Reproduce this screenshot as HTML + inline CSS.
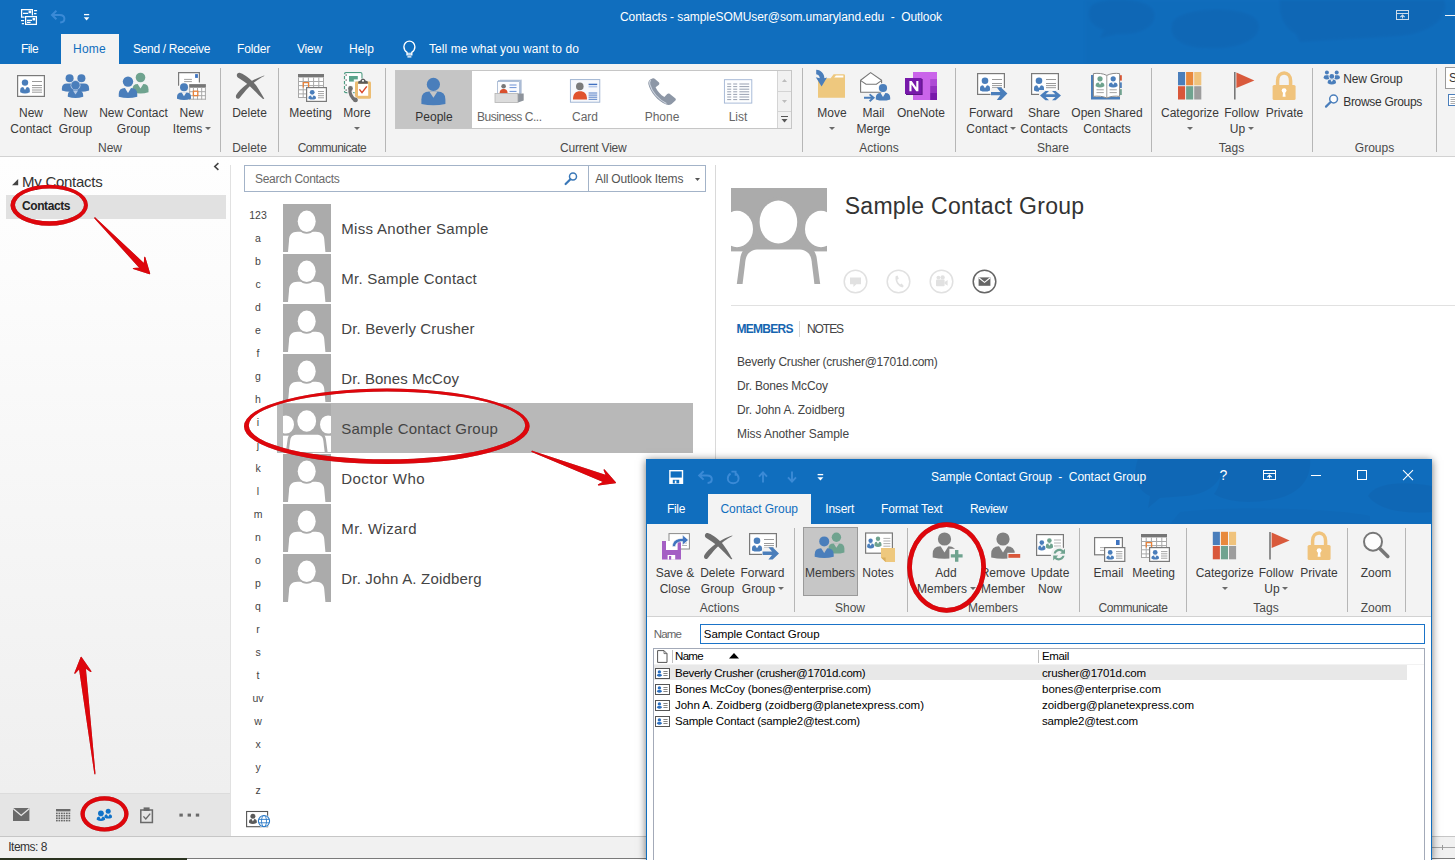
<!DOCTYPE html>
<html><head><meta charset="utf-8"><title>Contacts - Outlook</title>
<style>
html,body{margin:0;padding:0;}
body{width:1455px;height:860px;overflow:hidden;position:relative;background:#fff;font-family:"Liberation Sans",sans-serif;}
body div,body svg,.t{position:absolute;}
.t{white-space:nowrap;display:block;}
svg{overflow:visible;}
</style></head><body>
<div style="left:0px;top:0px;width:1455px;height:64px;background:#106ebe;"></div>
<div style="left:0px;top:64px;width:1455px;height:92px;background:#f3f3f3;"></div>
<div style="left:0px;top:156px;width:1455px;height:1px;background:#d2d2d2;"></div>
<div style="left:0px;top:157px;width:230px;height:636px;background:linear-gradient(#fefefe,#fcfcfc 18%,#efefef);"></div>
<div style="left:230px;top:165px;width:1px;height:671px;background:#e1e1e1;"></div>
<div style="left:0px;top:793px;width:230px;height:43px;background:#e5e5e5;"></div>
<div style="left:0px;top:793px;width:230px;height:1px;background:#dcdcdc;"></div>
<div style="left:715px;top:165px;width:1px;height:671px;background:#d9d9d9;"></div>
<div style="left:0px;top:836px;width:1455px;height:22px;background:#f1f1f1;"></div>
<div style="left:0px;top:836px;width:1455px;height:1px;background:#c6c6c6;"></div>
<div style="left:0px;top:858.4px;width:1455px;height:2px;background:#fff;"></div>
<div style="left:0px;top:858.4px;width:187px;height:2px;background:#2b3320;"></div>
<div style="left:187px;top:858.4px;width:1268px;height:0.8px;background:#7a7a7a;"></div>
<span class="t" style="left:620.00px;top:8.00px;font-size:12px;line-height:18px;color:#fff;letter-spacing:-0.067px;white-space:pre;">Contacts - sampleSOMUser@som.umaryland.edu  -  Outlook</span>
<div style="left:61px;top:34px;width:58px;height:30px;background:#f3f3f3;"></div>
<span class="t" style="left:21.00px;top:39.50px;font-size:12px;line-height:18px;color:#fff;letter-spacing:-0.584px;">File</span>
<span class="t" style="left:73.00px;top:39.50px;font-size:12px;line-height:18px;color:#106ebe;letter-spacing:0.248px;">Home</span>
<span class="t" style="left:133.00px;top:39.50px;font-size:12px;line-height:18px;color:#fff;letter-spacing:-0.313px;">Send / Receive</span>
<span class="t" style="left:237.00px;top:39.50px;font-size:12px;line-height:18px;color:#fff;letter-spacing:-0.169px;">Folder</span>
<span class="t" style="left:297.00px;top:39.50px;font-size:12px;line-height:18px;color:#fff;letter-spacing:-0.198px;">View</span>
<span class="t" style="left:349.00px;top:39.50px;font-size:12px;line-height:18px;color:#fff;letter-spacing:0.080px;">Help</span>
<span class="t" style="left:429.00px;top:39.50px;font-size:12px;line-height:18px;color:#fff;letter-spacing:0.071px;">Tell me what you want to do</span>
<span class="t" style="left:19.00px;top:104.00px;font-size:12px;line-height:18px;color:#3a3a3a;">New</span>
<span class="t" style="left:10.32px;top:120.00px;font-size:12px;line-height:18px;color:#3a3a3a;">Contact</span>
<span class="t" style="left:63.50px;top:104.00px;font-size:12px;line-height:18px;color:#3a3a3a;">New</span>
<span class="t" style="left:58.82px;top:120.00px;font-size:12px;line-height:18px;color:#3a3a3a;">Group</span>
<span class="t" style="left:99.15px;top:104.00px;font-size:12px;line-height:18px;color:#3a3a3a;">New Contact</span>
<span class="t" style="left:116.82px;top:120.00px;font-size:12px;line-height:18px;color:#3a3a3a;">Group</span>
<span class="t" style="left:179.50px;top:104.00px;font-size:12px;line-height:18px;color:#3a3a3a;">New</span>
<span class="t" style="left:172.83px;top:120.00px;font-size:12px;line-height:18px;color:#3a3a3a;">Items</span>
<svg style="left:204.6690625px;top:127.1px;" width="6" height="3" viewBox="0 0 6 3"><path d="M0 0H6L3.0 3Z" fill="#6a6a6a"/></svg>
<span class="t" style="left:98.00px;top:139.00px;font-size:12px;line-height:18px;color:#4a4a4a;">New</span>
<div style="left:220px;top:68px;width:1px;height:84px;background:#b6b6b6;"></div>
<span class="t" style="left:232.16px;top:104.00px;font-size:12px;line-height:18px;color:#3a3a3a;">Delete</span>
<span class="t" style="left:232.16px;top:139.00px;font-size:12px;line-height:18px;color:#4a4a4a;">Delete</span>
<div style="left:278px;top:68px;width:1px;height:84px;background:#b6b6b6;"></div>
<span class="t" style="left:289.35px;top:104.00px;font-size:12px;line-height:18px;color:#3a3a3a;">Meeting</span>
<span class="t" style="left:343.33px;top:104.00px;font-size:12px;line-height:18px;color:#3a3a3a;">More</span>
<svg style="left:354.0px;top:126.9px;" width="6" height="3" viewBox="0 0 6 3"><path d="M0 0H6L3.0 3Z" fill="#6a6a6a"/></svg>
<span class="t" style="left:297.70px;top:139.00px;font-size:12px;line-height:18px;color:#4a4a4a;letter-spacing:-0.503px;">Communicate</span>
<div style="left:385px;top:68px;width:1px;height:84px;background:#b6b6b6;"></div>
<div style="left:395px;top:70px;width:397px;height:59px;background:#fff;border:1px solid #c6c6c6;box-sizing:border-box;"></div>
<div style="left:396px;top:71px;width:76px;height:57px;background:#c5c5c5;"></div>
<span class="t" style="left:415.32px;top:108.00px;font-size:12px;line-height:18px;color:#333;">People</span>
<span class="t" style="left:477.00px;top:108.00px;font-size:12px;line-height:18px;color:#666;letter-spacing:-0.476px;">Business C...</span>
<span class="t" style="left:572.00px;top:108.00px;font-size:12px;line-height:18px;color:#666;">Card</span>
<span class="t" style="left:644.65px;top:108.00px;font-size:12px;line-height:18px;color:#666;">Phone</span>
<span class="t" style="left:728.66px;top:108.00px;font-size:12px;line-height:18px;color:#666;">List</span>
<div style="left:777px;top:71px;width:1px;height:57px;background:#d4d4d4;"></div>
<div style="left:778px;top:71px;width:13px;height:57px;background:#f1f1f1;"></div>
<div style="left:778px;top:91px;width:13px;height:1px;background:#d4d4d4;"></div>
<div style="left:778px;top:111px;width:13px;height:1px;background:#d4d4d4;"></div>
<svg style="left:782px;top:79px;" width="5" height="3" viewBox="0 0 5 3"><path d="M0 3H5L2.5 0Z" fill="#bdbdbd"/></svg>
<svg style="left:782px;top:100px;" width="5" height="3" viewBox="0 0 5 3"><path d="M0 0H5L2.5 3Z" fill="#bdbdbd"/></svg>
<svg style="left:781px;top:116px;" width="7" height="8" viewBox="0 0 7 8"><path d="M0 0.5H7" stroke="#555" stroke-width="1"/><path d="M0.5 3H6.5L3.5 6.5Z" fill="#555"/></svg>
<span class="t" style="left:560.00px;top:139.00px;font-size:12px;line-height:18px;color:#4a4a4a;letter-spacing:-0.220px;">Current View</span>
<div style="left:802px;top:68px;width:1px;height:84px;background:#b6b6b6;"></div>
<span class="t" style="left:817.33px;top:104.00px;font-size:12px;line-height:18px;color:#3a3a3a;">Move</span>
<svg style="left:829.0px;top:126.9px;" width="6" height="3" viewBox="0 0 6 3"><path d="M0 0H6L3.0 3Z" fill="#6a6a6a"/></svg>
<span class="t" style="left:862.50px;top:104.00px;font-size:12px;line-height:18px;color:#3a3a3a;">Mail</span>
<span class="t" style="left:856.49px;top:120.00px;font-size:12px;line-height:18px;color:#3a3a3a;">Merge</span>
<span class="t" style="left:896.99px;top:104.00px;font-size:12px;line-height:18px;color:#3a3a3a;">OneNote</span>
<span class="t" style="left:859.32px;top:139.00px;font-size:12px;line-height:18px;color:#4a4a4a;">Actions</span>
<div style="left:955px;top:68px;width:1px;height:84px;background:#b6b6b6;"></div>
<span class="t" style="left:968.99px;top:104.00px;font-size:12px;line-height:18px;color:#3a3a3a;">Forward</span>
<span class="t" style="left:966.32px;top:120.00px;font-size:12px;line-height:18px;color:#3a3a3a;">Contact</span>
<svg style="left:1010.17796875px;top:127.1px;" width="6" height="3" viewBox="0 0 6 3"><path d="M0 0H6L3.0 3Z" fill="#6a6a6a"/></svg>
<span class="t" style="left:1027.99px;top:104.00px;font-size:12px;line-height:18px;color:#3a3a3a;">Share</span>
<span class="t" style="left:1020.32px;top:120.00px;font-size:12px;line-height:18px;color:#3a3a3a;">Contacts</span>
<span class="t" style="left:1071.31px;top:104.00px;font-size:12px;line-height:18px;color:#3a3a3a;">Open Shared</span>
<span class="t" style="left:1083.32px;top:120.00px;font-size:12px;line-height:18px;color:#3a3a3a;">Contacts</span>
<span class="t" style="left:1036.99px;top:139.00px;font-size:12px;line-height:18px;color:#4a4a4a;">Share</span>
<div style="left:1151px;top:68px;width:1px;height:84px;background:#b6b6b6;"></div>
<span class="t" style="left:1160.98px;top:104.00px;font-size:12px;line-height:18px;color:#3a3a3a;">Categorize</span>
<svg style="left:1187.0px;top:126.9px;" width="6" height="3" viewBox="0 0 6 3"><path d="M0 0H6L3.0 3Z" fill="#6a6a6a"/></svg>
<span class="t" style="left:1224.16px;top:104.00px;font-size:12px;line-height:18px;color:#3a3a3a;">Follow</span>
<span class="t" style="left:1229.83px;top:120.00px;font-size:12px;line-height:18px;color:#3a3a3a;">Up</span>
<svg style="left:1247.6699999999998px;top:127.1px;" width="6" height="3" viewBox="0 0 6 3"><path d="M0 0H6L3.0 3Z" fill="#6a6a6a"/></svg>
<span class="t" style="left:1265.83px;top:104.00px;font-size:12px;line-height:18px;color:#3a3a3a;">Private</span>
<span class="t" style="left:1218.83px;top:139.00px;font-size:12px;line-height:18px;color:#4a4a4a;">Tags</span>
<div style="left:1312px;top:68px;width:1px;height:84px;background:#b6b6b6;"></div>
<span class="t" style="left:1343.20px;top:69.70px;font-size:12px;line-height:18px;color:#333;letter-spacing:-0.144px;">New Group</span>
<span class="t" style="left:1343.20px;top:93.00px;font-size:12px;line-height:18px;color:#333;letter-spacing:-0.300px;">Browse Groups</span>
<span class="t" style="left:1354.82px;top:139.00px;font-size:12px;line-height:18px;color:#4a4a4a;">Groups</span>
<div style="left:1436px;top:68px;width:1px;height:84px;background:#b6b6b6;"></div>
<div style="left:1445px;top:67px;width:12px;height:22px;background:#fff;border:1px solid #9a9a9a;box-sizing:border-box;"></div>
<span class="t" style="left:1449.00px;top:69.00px;font-size:12px;line-height:18px;color:#333;">S</span>
<svg style="left:0;top:0" width="1455" height="160" viewBox="0 0 1455 160"><rect x="17.6" y="75.6" width="26.8" height="20.8" fill="#fff" stroke="#7a7a7a" stroke-width="1.2"/><path d="M20.2 92.3V90.168Q20.2 87 23.368 87H26.632Q29.8 87 29.8 90.168V92.3Q25 94.7 20.2 92.3Z" fill="#4a7ebb"/><path d="M23.016 86.8L25 90.04L26.984 86.8Z" fill="#fff"/><circle cx="25" cy="82.6" r="3.2" fill="#4a7ebb"/><path d="M32 81.5H42" stroke="#9a9a9a" stroke-width="1"/><path d="M32 85.5H42" stroke="#9a9a9a" stroke-width="1"/><path d="M32 87.7H42" stroke="#9a9a9a" stroke-width="1"/><path d="M32 90H42" stroke="#9a9a9a" stroke-width="1"/><path d="M32 92.2H42" stroke="#9a9a9a" stroke-width="1"/><path d="M61.89999999999999 90.6V88.582Q61.89999999999999 83.5 66.982 83.5H72.21799999999999Q77.3 83.5 77.3 88.582V90.6Q69.6 93.0 61.89999999999999 90.6Z" fill="#4a7ebb"/><circle cx="69.6" cy="78.3" r="4" fill="#4a7ebb"/><path d="M73.7 90.6V88.582Q73.7 83.5 78.78200000000001 83.5H84.018Q89.10000000000001 83.5 89.10000000000001 88.582V90.6Q81.4 93.0 73.7 90.6Z" fill="#4a7ebb"/><circle cx="81.4" cy="78.3" r="4" fill="#4a7ebb"/><circle cx="75.5" cy="85.3" r="5.0" fill="#b7cbe6"/><path d="M67.8 96.8V95.68199999999999Q67.8 90.6 72.882 90.6H78.118Q83.2 90.6 83.2 95.68199999999999V96.8Q75.5 99.2 67.8 96.8Z" fill="#4a7ebb"/><path d="M72.896 90.39999999999999L75.5 94.58999999999999L78.104 90.39999999999999Z" fill="#b7cbe6"/><circle cx="75.5" cy="85.3" r="4.2" fill="#4a7ebb"/><path d="M132.5 92.3V89.28Q132.5 84 137.78 84H143.22Q148.5 84 148.5 89.28V92.3Q140.5 94.7 132.5 92.3Z" fill="#6fa38f"/><path d="M137.524 83.8L140.5 88.56L143.476 83.8Z" fill="#f3f3f3"/><circle cx="140.5" cy="77.5" r="4.8" fill="#6fa38f"/><circle cx="128" cy="81.6" r="6.0" fill="#f3f3f3"/><path d="M118.75 96.8V94.105Q118.75 88 124.855 88H131.145Q137.25 88 137.25 94.105V96.8Q128 99.2 118.75 96.8Z" fill="#4a7ebb"/><path d="M124.776 87.8L128 92.94L131.224 87.8Z" fill="#f3f3f3"/><circle cx="128" cy="81.6" r="5.2" fill="#4a7ebb"/><rect x="178.6" y="72.6" width="20.8" height="14" fill="#fff"/><path d="M178.6 85.8V72.6H199.4V82.6" fill="none" stroke="#7a7a7a" stroke-width="1.2"/><rect x="195.1" y="74.1" width="2.8" height="3.8" fill="#3f74c0"/><path d="M184.1 79.4H191.9" stroke="#a0a0a0" stroke-width="1"/><path d="M184.1 81.6H191.9" stroke="#a0a0a0" stroke-width="1"/><rect x="189.2" y="84.1" width="16.7" height="15.6" fill="#fff"/><rect x="189.2" y="84.1" width="16.7" height="3.6" fill="#767676"/><path d="M189.7 87.69999999999999V99.69999999999999" stroke="#a8a8a8" stroke-width="1"/><path d="M193.4 87.69999999999999V99.69999999999999" stroke="#a8a8a8" stroke-width="1"/><path d="M197.5 87.69999999999999V99.69999999999999" stroke="#a8a8a8" stroke-width="1"/><path d="M201.7 87.69999999999999V99.69999999999999" stroke="#a8a8a8" stroke-width="1"/><path d="M205.4 87.69999999999999V99.69999999999999" stroke="#a8a8a8" stroke-width="1"/><path d="M189.2 91.7H205.89999999999998" stroke="#a8a8a8" stroke-width="1"/><path d="M189.2 95.7H205.89999999999998" stroke="#a8a8a8" stroke-width="1"/><path d="M189.2 99.2H205.89999999999998" stroke="#a8a8a8" stroke-width="1"/><rect x="193.4" y="91.2" width="4.4" height="4.4" fill="#fff" stroke="#e8823a" stroke-width="1.3"/><circle cx="184" cy="87.3" r="4.8" fill="#f3f3f3"/><path d="M177.0 98.8V97.02000000000001Q177.0 92.4 181.62 92.4H186.38Q191.0 92.4 191.0 97.02000000000001V98.8Q184 101.2 177.0 98.8Z" fill="#4a7ebb"/><path d="M181.52 92.2L184 96.2L186.48 92.2Z" fill="#f3f3f3"/><circle cx="184" cy="87.3" r="4" fill="#4a7ebb"/><path d="M239.6 72.8C243 73.5 247.6 77 253.4 82.2C257 86 261 93 264.3 98.8L263 99C259 95.5 254 90 250.1 86.4C246 83 242 80 237.8 77.6C235.8 75.5 237 72.6 239.6 72.8Z" fill="#6d6d6d"/><path d="M264.2 75.4C258 77.5 251 81 246.7 84.3C242 88 238 92 236.2 95C235 98 237.5 99.6 239.4 98.2C241 96.5 244 92 248.8 87.2C253 83 259 78.5 264.3 75.9Z" fill="#6d6d6d"/><rect x="298" y="74" width="26" height="24" fill="#fff"/><rect x="298" y="74" width="26" height="3.4" fill="#767676"/><path d="M298.5 77.4V98" stroke="#a8a8a8" stroke-width="1"/><path d="M303.2 77.4V98" stroke="#a8a8a8" stroke-width="1"/><path d="M308.4 77.4V98" stroke="#a8a8a8" stroke-width="1"/><path d="M313.6 77.4V98" stroke="#a8a8a8" stroke-width="1"/><path d="M318.8 77.4V98" stroke="#a8a8a8" stroke-width="1"/><path d="M323.5 77.4V98" stroke="#a8a8a8" stroke-width="1"/><path d="M298 81.5H324" stroke="#a8a8a8" stroke-width="1"/><path d="M298 85.6H324" stroke="#a8a8a8" stroke-width="1"/><path d="M298 89.8H324" stroke="#a8a8a8" stroke-width="1"/><path d="M298 93.9H324" stroke="#a8a8a8" stroke-width="1"/><path d="M298 97.5H324" stroke="#a8a8a8" stroke-width="1"/><path d="M303.3 87.4V82.6H308.6V87" fill="none" stroke="#e8823a" stroke-width="1.3"/><rect x="306.6" y="87.6" width="19.8" height="13.8" fill="#fff" stroke="#7a7a7a" stroke-width="1.2"/><path d="M308.4 98.39999999999999V97.908Q308.4 95.4 310.90799999999996 95.4H313.492Q316.0 95.4 316.0 97.908V98.39999999999999Q312.2 100.8 308.4 98.39999999999999Z" fill="#4a7ebb"/><path d="M310.712 95.2L312.2 97.68L313.688 95.2Z" fill="#fff"/><circle cx="312.2" cy="92.3" r="2.4" fill="#4a7ebb"/><path d="M318 91.5H324" stroke="#9a9a9a" stroke-width="0.9"/><path d="M318 93.6H324" stroke="#9a9a9a" stroke-width="0.9"/><path d="M318 95.7H324" stroke="#9a9a9a" stroke-width="0.9"/><path d="M318 97.8H324" stroke="#9a9a9a" stroke-width="0.9"/><path d="M361.9 78.4V74Q361.9 72.6 360.5 72.6H345.9Q344.5 72.6 344.5 74V91.3Q344.5 92.7 345.9 92.7H354.6" fill="#fdfefe" stroke="#4e9b82" stroke-width="1.2"/><rect x="346" y="73.4" width="15.2" height="18.6" fill="#fdfefe"/><rect x="343" y="74.2" width="3.6" height="1.8" fill="#f3f3f3"/><rect x="345.4" y="74.3" width="1.6" height="1.6" fill="#9a9a9a"/><rect x="343" y="79.2" width="3.6" height="1.8" fill="#f3f3f3"/><rect x="345.4" y="79.3" width="1.6" height="1.6" fill="#9a9a9a"/><rect x="343" y="84.2" width="3.6" height="1.8" fill="#f3f3f3"/><rect x="345.4" y="84.3" width="1.6" height="1.6" fill="#9a9a9a"/><rect x="343" y="89.2" width="3.6" height="1.8" fill="#f3f3f3"/><rect x="345.4" y="89.3" width="1.6" height="1.6" fill="#9a9a9a"/><rect x="349" y="76" width="8.8" height="5.6" fill="#5aa38b"/><rect x="353.8" y="79.4" width="4.2" height="2.4" fill="#fdfefe"/><rect x="355" y="81.4" width="16" height="17.4" fill="#ecbd73" rx="1.4"/><rect x="358" y="83.6" width="10.2" height="12.2" fill="#fff"/><path d="M358.2 83.8V81.4L360.6 80.6C360.8 79.4 361.8 78.8 363 78.8C364.2 78.8 365.2 79.4 365.4 80.6L367.8 81.4V83.8Z" fill="#5a5a5a"/><rect x="362.1" y="80" width="1.8" height="1.6" fill="#fff"/><path d="M359.4 89.4L362 92.6L366.8 86.4" fill="none" stroke="#d9462b" stroke-width="1.5"/><path d="M350.3 88.2C349 92.6 351.6 98.6 355.8 100.3" fill="none" stroke="#f3f3f3" stroke-width="5.6" stroke-linecap="round"/><path d="M350.3 88.2C349 92.6 351.6 98.6 355.8 100.3" fill="none" stroke="#707070" stroke-width="3.2" stroke-linecap="round"/><circle cx="350.5" cy="88.4" r="2.3" fill="#707070"/><circle cx="355.4" cy="99.9" r="2.4" fill="#707070"/><path d="M421.4 104.0V99.52Q421.4 91.6 429.32 91.6H437.47999999999996Q445.4 91.6 445.4 99.52V104.0Q433.4 106.4 421.4 104.0Z" fill="#4a7ebb"/><path d="M429.308 91.39999999999999L433.4 97.86999999999999L437.49199999999996 91.39999999999999Z" fill="#c5c5c5"/><circle cx="433.4" cy="84.4" r="6.6" fill="#4a7ebb"/><rect x="500" y="79.6" width="22" height="14" fill="#c9d3e2"/><rect x="498.5" y="80.6" width="22" height="14" fill="#e9eef6" stroke="#9fb2cf" stroke-width="0.8"/><rect x="497.4" y="81.6" width="22" height="13" fill="#fbfcfe" stroke="#9fb2cf" stroke-width="0.8"/><circle cx="503.6" cy="86.2" r="2.3" fill="#777"/><path d="M499.6 93.4C499.6 90 501.4 89 503.6 89C505.8 89 507.6 90 507.6 93.4Z" fill="#d9502d"/><path d="M509.5 85H516.5" stroke="#5b86d0" stroke-width="0.9"/><path d="M509.5 87.6H516.5" stroke="#5b86d0" stroke-width="0.9"/><path d="M509.5 91.4H516.5" stroke="#5b86d0" stroke-width="0.9"/><path d="M517.7 93.6H523.7V100.6L518 102.4Z" fill="#8e949c"/><rect x="495" y="93.5" width="22.8" height="9" fill="#dcdcdc" stroke="#b4b4b4" stroke-width="0.8"/><rect x="570.4" y="79.6" width="29.4" height="22.6" fill="#f6f8fc" stroke="#9ab0d0" stroke-width="0.9"/><path d="M573 99.4C573 93.6 575.6 91.2 580 91.2C584.4 91.2 587 93.6 587 99.4Z" fill="#e0532e"/><circle cx="579.8" cy="86.4" r="3.8" fill="#7b7b7b"/><path d="M588.6 84.4H597.2" stroke="#3f6fc0" stroke-width="1.4"/><path d="M588.6 86.8H597.2" stroke="#7d9fda" stroke-width="0.8"/><path d="M588.6 93H597.2" stroke="#3f6fc0" stroke-width="0.9"/><path d="M588.6 95.1H597.2" stroke="#3f6fc0" stroke-width="0.9"/><path d="M588.6 97.2H597.2" stroke="#3f6fc0" stroke-width="0.9"/><path d="M588.6 99.3H597.2" stroke="#3f6fc0" stroke-width="0.9"/><path d="M650.2 79.4C648.6 80.6 648 82.4 648.4 84.2C650.4 92.4 657.6 100.8 666.2 104.6C668 105.4 670.2 105.2 671.6 104L675.4 100.4C676 99.8 676 98.8 675.2 98.2L669.6 93.8C668.8 93.2 667.8 93.4 667.2 94L664.4 97C660.6 94.8 657.4 91.2 655.6 87.2L658.6 85C659.4 84.4 659.6 83.4 659 82.6L655 79C654.2 78.2 653.2 78.2 652.4 78.6Z" fill="#8d97a6"/><path d="M650.6 80.2C649.6 81.4 649.4 82.8 649.8 84.4C651.8 91.8 658.4 99.6 666.4 103.4" fill="none" stroke="#cfd6e0" stroke-width="1.1"/><rect x="724.4" y="79.7" width="27.4" height="23.4" fill="#fdfeff" stroke="#a0b4d4" stroke-width="0.9"/><path d="M727.2 84H731.2M733.2 84H737.2M739.4 84H749.2" stroke="#8d96a8" stroke-width="0.9"/><path d="M727.2 86.6H731.2M733.2 86.6H737.2M739.4 86.6H749.2" stroke="#8d96a8" stroke-width="0.9"/><path d="M727.2 89.2H731.2M733.2 89.2H737.2M739.4 89.2H749.2" stroke="#8d96a8" stroke-width="0.9"/><path d="M727.2 91.8H731.2M733.2 91.8H737.2M739.4 91.8H749.2" stroke="#8d96a8" stroke-width="0.9"/><path d="M727.2 94.4H731.2M733.2 94.4H737.2M739.4 94.4H749.2" stroke="#8d96a8" stroke-width="0.9"/><path d="M727.2 97H731.2M733.2 97H737.2M739.4 97H749.2" stroke="#8d96a8" stroke-width="0.9"/><path d="M727.2 99.6H731.2M733.2 99.6H737.2M739.4 99.6H749.2" stroke="#8d96a8" stroke-width="0.9"/><path d="M818 78.2H830.6L833.6 74.2H843.6Q845 74.2 845 75.6V97.8H818Z" fill="#eec87e"/><path d="M834.2 77.6L835.9 75.4H843.4V77.6Z" fill="#fff"/><path d="M816.2 69.8C821.4 70.2 824.2 73.8 824.4 78.2L827 77.6L821.6 86.4L815.8 77.2L819.8 78.2C819.6 76 818.4 74.6 816.2 74.2Z" fill="#4a7ebb"/><path d="M860.6 92.3V80.2L870.6 72.6L881.6 80.2V92.3Z" fill="#fff" stroke="#777" stroke-width="1.1" stroke-linejoin="round"/><path d="M860.8 80.6L866 84.2H876.4L881.4 80.6" fill="none" stroke="#777" stroke-width="1.1"/><circle cx="883" cy="88" r="4.8999999999999995" fill="#f3f3f3"/><path d="M875.8 99.39999999999999V97.752Q875.8 93 880.5519999999999 93H885.4480000000001Q890.2 93 890.2 97.752V99.39999999999999Q883 101.8 875.8 99.39999999999999Z" fill="#4a7ebb"/><path d="M880.458 92.8L883 96.895L885.542 92.8Z" fill="#f3f3f3"/><circle cx="883" cy="88" r="4.1" fill="#4a7ebb"/><path d="M864 97.8H872.4M869.6 94.4L873.6 97.8L869.6 101.2" fill="none" stroke="#4a7ebb" stroke-width="1.9"/><rect x="913" y="72" width="24" height="28" fill="#ca64ea"/><rect x="930.2" y="79" width="6.8" height="7" fill="#ae4bd5"/><rect x="930.2" y="86" width="6.8" height="7" fill="#9332bf"/><rect x="930.2" y="93" width="6.8" height="7" fill="#7719aa"/><rect x="906" y="79" width="16.6" height="16" fill="#5c1285"/><rect x="905" y="78" width="16.6" height="16" fill="#7719aa"/><path d="M909.4 91.2V81H911.7L916.3 87.6V81H918.4V91.2H916.2L911.5 84.5V91.2Z" fill="#fff"/><rect x="977.6" y="73.6" width="26.8" height="20.8" fill="#fff" stroke="#7a7a7a" stroke-width="1.2"/><path d="M980.0 90.39999999999999V88.5Q980.0 85.2 983.3 85.2H986.7Q990.0 85.2 990.0 88.5V90.39999999999999Q985 92.8 980.0 90.39999999999999Z" fill="#4a7ebb"/><path d="M982.954 85.0L985 88.33500000000001L987.046 85.0Z" fill="#fff"/><circle cx="985" cy="80.7" r="3.3" fill="#4a7ebb"/><path d="M992 79.5H1002" stroke="#9a9a9a" stroke-width="1"/><path d="M992 83.5H1002" stroke="#9a9a9a" stroke-width="1"/><path d="M992 85.6H1002" stroke="#9a9a9a" stroke-width="1"/><path d="M992 87.7H1002" stroke="#9a9a9a" stroke-width="1"/><rect x="990.5" y="88" width="17" height="13" fill="#f3f3f3"/><path d="M991 92H1000.3L996.8 87.4H1001L1007.4 93.6L1001 99.9H996.8L1000.3 95.2H991Z" fill="#4a7ebb"/><rect x="1031.6" y="73.6" width="26.8" height="20.8" fill="#fff" stroke="#7a7a7a" stroke-width="1.2"/><path d="M1034.0 90.39999999999999V88.5Q1034.0 85.2 1037.3 85.2H1040.7Q1044.0 85.2 1044.0 88.5V90.39999999999999Q1039 92.8 1034.0 90.39999999999999Z" fill="#4a7ebb"/><path d="M1036.954 85.0L1039 88.33500000000001L1041.046 85.0Z" fill="#fff"/><circle cx="1039" cy="80.7" r="3.3" fill="#4a7ebb"/><path d="M1046 79.5H1056" stroke="#9a9a9a" stroke-width="1"/><path d="M1046 83.5H1056" stroke="#9a9a9a" stroke-width="1"/><path d="M1046 85.6H1056" stroke="#9a9a9a" stroke-width="1"/><path d="M1046 87.7H1056" stroke="#9a9a9a" stroke-width="1"/><rect x="1039" y="90" width="23" height="11" fill="#f3f3f3"/><path d="M1040 95.6L1045.4 91H1049L1045.6 94.2H1055.4L1052 91H1055.6L1061 95.6L1055.6 100.2H1052L1055.4 97H1045.6L1049 100.2H1045.4Z" fill="#4a7ebb"/><path d="M1091 75H1094V97H1120V99.4H1091Z" fill="#4a7ebb"/><rect x="1119.4" y="75.2" width="2.4" height="5.4" fill="#d9502d"/><rect x="1119.4" y="82.4" width="2.4" height="5.6" fill="#4a7ebb"/><rect x="1119.4" y="89.2" width="2.4" height="5.8" fill="#6fa38f"/><path d="M1093.4 73.6C1098 73 1103 73.4 1106.8 75.4C1110.6 73.4 1115.4 73 1119.6 73.6V96.4C1115 95.8 1110.6 96.2 1106.8 98C1103 96.2 1098 95.8 1093.4 96.4Z" fill="#fff" stroke="#8a8a8a" stroke-width="1"/><path d="M1106.8 75.4V98" stroke="#9a9a9a" stroke-width="1"/><path d="M1095.7 86.2V85.238Q1095.7 82.4 1098.538 82.4H1101.462Q1104.3 82.4 1104.3 85.238V86.2Q1100 88.60000000000001 1095.7 86.2Z" fill="#6fa38f"/><path d="M1098.388 82.2L1100 84.87L1101.612 82.2Z" fill="#fff"/><circle cx="1100" cy="78.8" r="2.6" fill="#6fa38f"/><path d="M1108.9 86.2V85.238Q1108.9 82.4 1111.738 82.4H1114.662Q1117.5 82.4 1117.5 85.238V86.2Q1113.2 88.60000000000001 1108.9 86.2Z" fill="#4a7ebb"/><path d="M1111.588 82.2L1113.2 84.87L1114.8120000000001 82.2Z" fill="#fff"/><circle cx="1113.2" cy="78.8" r="2.6" fill="#4a7ebb"/><path d="M1096.5 89.8H1103.8" stroke="#9a9a9a" stroke-width="0.9"/><path d="M1096.5 92.6H1103.8" stroke="#9a9a9a" stroke-width="0.9"/><path d="M1109.6 89.8H1116.8" stroke="#9a9a9a" stroke-width="0.9"/><path d="M1109.6 92.6H1116.8" stroke="#9a9a9a" stroke-width="0.9"/><rect x="1178.0" y="72.0" width="7.1" height="13.3" fill="#4a7ebb"/><rect x="1186.1" y="72.0" width="7.1" height="13.3" fill="#e8893c"/><rect x="1194.2" y="72.0" width="7.1" height="13.3" fill="#f0c37c"/><rect x="1178.0" y="86.2" width="7.1" height="13.3" fill="#d9573a"/><rect x="1186.1" y="86.2" width="7.1" height="13.3" fill="#6fa38f"/><rect x="1194.2" y="86.2" width="7.1" height="13.3" fill="#9d9d9d"/><path d="M1234.8 72V99.6" stroke="#777" stroke-width="1.6"/><path d="M1236.3999999999999 72.4L1254.3999999999999 80.4L1236.3999999999999 88Z" fill="#d95a3c"/><path d="M1277.6 86V81C1277.6 70.4 1290.6 70.4 1290.6 81V86" fill="none" stroke="#f0c37c" stroke-width="3.5"/><rect x="1272.6" y="85" width="23" height="15" fill="#f0c37c" rx="1.6"/><circle cx="1284.1" cy="90.6" r="2.4" fill="#fff"/><path d="M1283.1 91.5H1285.1L1285.6 96.8H1282.6Z" fill="#fff"/><path d="M1323.7 78.2V77.312Q1323.7 75.2 1325.8120000000001 75.2H1327.988Q1330.1000000000001 75.2 1330.1000000000001 77.312V78.2Q1326.9 80.60000000000001 1323.7 78.2Z" fill="#4a7ebb"/><circle cx="1326.9" cy="72.5" r="2" fill="#4a7ebb"/><path d="M1333.5 78.2V77.312Q1333.5 75.2 1335.612 75.2H1337.788Q1339.9 75.2 1339.9 77.312V78.2Q1336.7 80.60000000000001 1333.5 78.2Z" fill="#4a7ebb"/><circle cx="1336.7" cy="72.5" r="2" fill="#4a7ebb"/><circle cx="1331.8" cy="76.4" r="3.2" fill="#f3f3f3"/><path d="M1327.7 83.2V82.306Q1327.7 79.6 1330.406 79.6H1333.194Q1335.8999999999999 79.6 1335.8999999999999 82.306V83.2Q1331.8 85.60000000000001 1327.7 83.2Z" fill="#4a7ebb"/><path d="M1330.312 79.39999999999999L1331.8 81.88L1333.288 79.39999999999999Z" fill="#f3f3f3"/><circle cx="1331.8" cy="76.4" r="2.4" fill="#4a7ebb"/><circle cx="1333.6" cy="99" r="3.9" fill="#fdfdfd" stroke="#4a7ebb" stroke-width="1.5"/><path d="M1330.6 102L1326 106.6" stroke="#4a7ebb" stroke-width="2.2" stroke-linecap="round"/><rect x="1448.5" y="94.5" width="8" height="11" fill="#fff" stroke="#4a7ebb" stroke-width="1"/><path d="M1450.5 97.5H1455" stroke="#9a9a9a" stroke-width="0.8"/><path d="M1450.5 99.5H1455" stroke="#9a9a9a" stroke-width="0.8"/><path d="M1450.5 101.5H1455" stroke="#9a9a9a" stroke-width="0.8"/><path d="M1450.5 103.5H1455" stroke="#9a9a9a" stroke-width="0.8"/><g fill="none" stroke="#fff" stroke-width="1.25"><path d="M24.6 17.2H21.6V9.6H32.4V15.6"/><rect x="25.6" y="16.6" width="10.8" height="7.8"/><path d="M23 13.3H28.2M27 20.4H32M27 22.4H30.6M34 10.6H37.1M34 13.7H36.5M21 20.5H24M21.8 23.6H24"/><rect x="29.2" y="11.2" width="1.4" height="1.4" fill="#fff"/><rect x="33.2" y="18.5" width="1.3" height="1.3" fill="#fff"/></g><path d="M52 15H59.6C62.8 15 64.4 16.8 64.4 18.8C64.4 21 62.8 22.4 60.2 22.6M56.4 10.8L52 15L56.4 19.2" fill="none" stroke="#3b8ad6" stroke-width="2"/><path d="M84 14.6H89.2" stroke="#fff" stroke-width="1.3"/><path d="M83.8 17.2H89.4L86.6 20.4Z" fill="#fff"/><path d="M407 54.9V52.4C405 51 403.9 49 403.9 46.8C403.9 43.6 406.4 41.1 409.4 41.1C412.4 41.1 414.9 43.6 414.9 46.8C414.9 49 413.8 51 411.8 52.4V54.9Z" fill="none" stroke="#fff" stroke-width="1.35"/><path d="M407 53.2H411.8M407.4 56.9H411.4" stroke="#fff" stroke-width="1.1"/><rect x="1396.5" y="10.5" width="12" height="9" fill="none" stroke="#fff" stroke-width="1"/><path d="M1396.5 13.5H1408.5" stroke="#fff" stroke-width="1"/><path d="M1402.5 18.6V15M1400.3 17.2L1402.5 15L1404.7 17.2" fill="none" stroke="#fff" stroke-width="1.1"/><path d="M1445 15.5H1455" stroke="#fff" stroke-width="1"/></svg>
<svg style="left:0;top:0;overflow:hidden" width="1455" height="64" viewBox="0 0 1455 64"><g fill="#0d4f94" opacity="0.2" style="filter:blur(1.2px)"><rect x="1085" y="0" width="370" height="64" opacity="0.28"/><path d="M1090 8C1094 -4 1150 -4 1154 12C1158 26 1140 36 1118 34L1100 38L1104 30C1092 26 1086 18 1090 8Z"/><path d="M1172 24C1176 6 1250 4 1258 22C1264 38 1240 50 1208 48C1186 48 1168 40 1172 24Z"/><path d="M1280 0H1444C1450 14 1436 32 1400 36L1300 42L1296 34C1284 28 1278 14 1280 0Z" opacity="1.5"/></g></svg>
<svg style="left:213px;top:162px;" width="7" height="9" viewBox="0 0 7 9"><path d="M5.4 1.2L1.8 4.5L5.4 7.8" fill="none" stroke="#444" stroke-width="1.6"/></svg>
<svg style="left:12px;top:179px;" width="7" height="7" viewBox="0 0 7 7"><path d="M6.2 0V6.2H0Z" fill="#444"/></svg>
<span class="t" style="left:22.00px;top:170.50px;font-size:15px;line-height:22px;color:#333;letter-spacing:-0.260px;">My Contacts</span>
<div style="left:6px;top:195px;width:220px;height:24px;background:#e1e1e1;"></div>
<span class="t" style="left:22.00px;top:197.00px;font-size:12px;line-height:18px;color:#222;font-weight:bold;letter-spacing:-0.418px;">Contacts</span>
<svg style="left:0;top:0" width="300" height="860" viewBox="0 0 300 860"><path d="M13 808H29.4V821H13Z" fill="#6a6a6a"/><path d="M13 808.4L21.2 815.4L29.4 808.4" fill="none" stroke="#e6e6e6" stroke-width="1.3"/><rect x="56" y="809" width="14.4" height="2.4" fill="#6a6a6a"/><rect x="56.0" y="812.6" width="1.7" height="1.6" fill="#6a6a6a"/><rect x="58.5" y="812.6" width="1.7" height="1.6" fill="#6a6a6a"/><rect x="61.0" y="812.6" width="1.7" height="1.6" fill="#6a6a6a"/><rect x="63.5" y="812.6" width="1.7" height="1.6" fill="#6a6a6a"/><rect x="66.0" y="812.6" width="1.7" height="1.6" fill="#6a6a6a"/><rect x="68.5" y="812.6" width="1.7" height="1.6" fill="#6a6a6a"/><rect x="56.0" y="815.0" width="1.7" height="1.6" fill="#6a6a6a"/><rect x="58.5" y="815.0" width="1.7" height="1.6" fill="#6a6a6a"/><rect x="61.0" y="815.0" width="1.7" height="1.6" fill="#6a6a6a"/><rect x="63.5" y="815.0" width="1.7" height="1.6" fill="#6a6a6a"/><rect x="66.0" y="815.0" width="1.7" height="1.6" fill="#6a6a6a"/><rect x="68.5" y="815.0" width="1.7" height="1.6" fill="#6a6a6a"/><rect x="56.0" y="817.4" width="1.7" height="1.6" fill="#6a6a6a"/><rect x="58.5" y="817.4" width="1.7" height="1.6" fill="#6a6a6a"/><rect x="61.0" y="817.4" width="1.7" height="1.6" fill="#6a6a6a"/><rect x="63.5" y="817.4" width="1.7" height="1.6" fill="#6a6a6a"/><rect x="66.0" y="817.4" width="1.7" height="1.6" fill="#6a6a6a"/><rect x="68.5" y="817.4" width="1.7" height="1.6" fill="#6a6a6a"/><rect x="56.0" y="819.8" width="1.7" height="1.6" fill="#6a6a6a"/><rect x="58.5" y="819.8" width="1.7" height="1.6" fill="#6a6a6a"/><rect x="61.0" y="819.8" width="1.7" height="1.6" fill="#6a6a6a"/><rect x="63.5" y="819.8" width="1.7" height="1.6" fill="#6a6a6a"/><rect x="66.0" y="819.8" width="1.7" height="1.6" fill="#6a6a6a"/><rect x="68.5" y="819.8" width="1.7" height="1.6" fill="#6a6a6a"/><path d="M104.4 817.4V816.808Q104.4 814.3 106.908 814.3H109.492Q112.0 814.3 112.0 816.808V817.4Q108.2 819.8000000000001 104.4 817.4Z" fill="#1072c8"/><path d="M106.65 814.0999999999999L108.2 816.675L109.75 814.0999999999999Z" fill="#e5e5e5"/><circle cx="108.2" cy="811.2" r="2.5" fill="#1072c8"/><circle cx="100.9" cy="813.3" r="3.7" fill="#e5e5e5"/><path d="M96.7 819.8V819.172Q96.7 816.4 99.47200000000001 816.4H102.328Q105.10000000000001 816.4 105.10000000000001 819.172V819.8Q100.9 822.2 96.7 819.8Z" fill="#1072c8"/><path d="M99.102 816.1999999999999L100.9 819.155L102.69800000000001 816.1999999999999Z" fill="#e5e5e5"/><circle cx="100.9" cy="813.3" r="2.9" fill="#1072c8"/><path d="M140.8 810H152.4V822.6H140.8Z" fill="none" stroke="#6a6a6a" stroke-width="1.5"/><rect x="143.6" y="807.4" width="6" height="3.6" fill="#6a6a6a"/><path d="M143.4 816.4L145.8 819L150.2 813.6" fill="none" stroke="#6a6a6a" stroke-width="1.4"/><rect x="179.4" y="813.6" width="3.4" height="3" fill="#6a6a6a"/><rect x="187.6" y="813.6" width="3.4" height="3" fill="#6a6a6a"/><rect x="195.8" y="813.6" width="3.4" height="3" fill="#6a6a6a"/></svg>
<span class="t" style="left:8.20px;top:838.00px;font-size:12px;line-height:18px;color:#333;letter-spacing:-0.485px;">Items: 8</span>
<div style="left:1432px;top:847px;width:23px;height:1px;background:#a6a6a6;"></div>
<div style="left:1442px;top:845px;width:1px;height:5px;background:#9a9a9a;"></div>
<div style="left:244px;top:165px;width:462px;height:27px;background:#fff;border:1px solid #a3b3c8;box-sizing:border-box;"></div>
<div style="left:588px;top:166px;width:1px;height:25px;background:#a3b3c8;"></div>
<span class="t" style="left:255.00px;top:170.00px;font-size:12px;line-height:18px;color:#6a6a6a;letter-spacing:-0.281px;">Search Contacts</span>
<svg style="left:563px;top:170px;" width="16" height="16" viewBox="0 0 16 16"><circle cx="10" cy="6.5" r="3.5" fill="none" stroke="#3a78b8" stroke-width="1.5"/><path d="M7.4 9.2L2.6 14" stroke="#3a78b8" stroke-width="2.2" stroke-linecap="round"/></svg>
<span class="t" style="left:595.30px;top:170.30px;font-size:12px;line-height:18px;color:#555;letter-spacing:-0.159px;">All Outlook Items</span>
<svg style="left:694.9px;top:178.3px;" width="5" height="3" viewBox="0 0 5 3"><path d="M0 0H5L2.5 3Z" fill="#555"/></svg>
<span class="t" style="left:249.24px;top:206.50px;font-size:10.5px;line-height:16px;color:#444;">123</span>
<span class="t" style="left:255.08px;top:229.50px;font-size:10.5px;line-height:16px;color:#444;">a</span>
<span class="t" style="left:255.08px;top:252.50px;font-size:10.5px;line-height:16px;color:#444;">b</span>
<span class="t" style="left:255.38px;top:275.50px;font-size:10.5px;line-height:16px;color:#444;">c</span>
<span class="t" style="left:255.08px;top:298.50px;font-size:10.5px;line-height:16px;color:#444;">d</span>
<span class="t" style="left:255.08px;top:321.50px;font-size:10.5px;line-height:16px;color:#444;">e</span>
<span class="t" style="left:256.54px;top:344.50px;font-size:10.5px;line-height:16px;color:#444;">f</span>
<span class="t" style="left:255.08px;top:367.50px;font-size:10.5px;line-height:16px;color:#444;">g</span>
<span class="t" style="left:255.08px;top:390.50px;font-size:10.5px;line-height:16px;color:#444;">h</span>
<span class="t" style="left:256.83px;top:413.50px;font-size:10.5px;line-height:16px;color:#444;">i</span>
<span class="t" style="left:256.83px;top:436.50px;font-size:10.5px;line-height:16px;color:#444;">j</span>
<span class="t" style="left:255.38px;top:459.50px;font-size:10.5px;line-height:16px;color:#444;">k</span>
<span class="t" style="left:256.83px;top:482.50px;font-size:10.5px;line-height:16px;color:#444;">l</span>
<span class="t" style="left:253.63px;top:505.50px;font-size:10.5px;line-height:16px;color:#444;">m</span>
<span class="t" style="left:255.08px;top:528.50px;font-size:10.5px;line-height:16px;color:#444;">n</span>
<span class="t" style="left:255.08px;top:551.50px;font-size:10.5px;line-height:16px;color:#444;">o</span>
<span class="t" style="left:255.08px;top:574.50px;font-size:10.5px;line-height:16px;color:#444;">p</span>
<span class="t" style="left:255.08px;top:597.50px;font-size:10.5px;line-height:16px;color:#444;">q</span>
<span class="t" style="left:256.25px;top:620.50px;font-size:10.5px;line-height:16px;color:#444;">r</span>
<span class="t" style="left:255.38px;top:643.50px;font-size:10.5px;line-height:16px;color:#444;">s</span>
<span class="t" style="left:256.54px;top:666.50px;font-size:10.5px;line-height:16px;color:#444;">t</span>
<span class="t" style="left:252.46px;top:689.50px;font-size:10.5px;line-height:16px;color:#444;">uv</span>
<span class="t" style="left:254.21px;top:712.50px;font-size:10.5px;line-height:16px;color:#444;">w</span>
<span class="t" style="left:255.38px;top:735.50px;font-size:10.5px;line-height:16px;color:#444;">x</span>
<span class="t" style="left:255.38px;top:758.50px;font-size:10.5px;line-height:16px;color:#444;">y</span>
<span class="t" style="left:255.38px;top:781.50px;font-size:10.5px;line-height:16px;color:#444;">z</span>
<div style="left:277.4px;top:403px;width:415.5px;height:49.8px;background:#b8b8b8;"></div>
<svg style="left:282.7px;top:204px;" width="48" height="48" viewBox="0 0 48 48"><rect x="0" y="0" width="48" height="48" fill="#ababab"/><path d="M5 48L6 37C6 30.5 9 27.8 14.5 27.8H32.8C38.4 27.8 41.4 30.5 41.4 37L42.4 48Z" fill="#fff"/><ellipse cx="23.7" cy="17.6" rx="10.4" ry="12.2" fill="#ababab"/><ellipse cx="23.7" cy="17.3" rx="9" ry="10.8" fill="#fff"/></svg>
<span class="t" style="left:341.30px;top:217.90px;font-size:15px;line-height:22px;color:#444;letter-spacing:0.298px;">Miss Another Sample</span>
<svg style="left:282.7px;top:254px;" width="48" height="48" viewBox="0 0 48 48"><rect x="0" y="0" width="48" height="48" fill="#ababab"/><path d="M5 48L6 37C6 30.5 9 27.8 14.5 27.8H32.8C38.4 27.8 41.4 30.5 41.4 37L42.4 48Z" fill="#fff"/><ellipse cx="23.7" cy="17.6" rx="10.4" ry="12.2" fill="#ababab"/><ellipse cx="23.7" cy="17.3" rx="9" ry="10.8" fill="#fff"/></svg>
<span class="t" style="left:341.30px;top:267.90px;font-size:15px;line-height:22px;color:#444;letter-spacing:0.221px;">Mr. Sample Contact</span>
<svg style="left:282.7px;top:304px;" width="48" height="48" viewBox="0 0 48 48"><rect x="0" y="0" width="48" height="48" fill="#ababab"/><path d="M5 48L6 37C6 30.5 9 27.8 14.5 27.8H32.8C38.4 27.8 41.4 30.5 41.4 37L42.4 48Z" fill="#fff"/><ellipse cx="23.7" cy="17.6" rx="10.4" ry="12.2" fill="#ababab"/><ellipse cx="23.7" cy="17.3" rx="9" ry="10.8" fill="#fff"/></svg>
<span class="t" style="left:341.30px;top:317.90px;font-size:15px;line-height:22px;color:#444;letter-spacing:0.128px;">Dr. Beverly Crusher</span>
<svg style="left:282.7px;top:354px;" width="48" height="48" viewBox="0 0 48 48"><rect x="0" y="0" width="48" height="48" fill="#ababab"/><path d="M5 48L6 37C6 30.5 9 27.8 14.5 27.8H32.8C38.4 27.8 41.4 30.5 41.4 37L42.4 48Z" fill="#fff"/><ellipse cx="23.7" cy="17.6" rx="10.4" ry="12.2" fill="#ababab"/><ellipse cx="23.7" cy="17.3" rx="9" ry="10.8" fill="#fff"/></svg>
<span class="t" style="left:341.30px;top:367.90px;font-size:15px;line-height:22px;color:#444;letter-spacing:0.066px;">Dr. Bones McCoy</span>
<svg style="left:282.7px;top:404px;overflow:hidden" width="48" height="48" viewBox="0 0 96 96"><rect x="0" y="0" width="96" height="96" fill="#ababab"/><rect x="0" y="63.4" width="96" height="32.6" fill="#fff"/><ellipse cx="6" cy="41" rx="16" ry="18.2" fill="#fff"/><ellipse cx="90" cy="41" rx="16" ry="18.2" fill="#fff"/><path d="M5.8 96L9 72C10 60 18 55.4 28 55.4H67C77 55.4 85 60 86 72L89.2 96Z" fill="#ababab"/><path d="M11.6 96L14.4 73C15.4 64.8 20.6 61.6 28 61.6H67C74.4 61.6 79.6 64.8 80.6 73L83.4 96Z" fill="#fff"/><ellipse cx="47.4" cy="34.6" rx="22.6" ry="25.4" fill="#ababab"/><ellipse cx="47.4" cy="34" rx="18.8" ry="21.4" fill="#fff"/></svg>
<span class="t" style="left:341.30px;top:417.90px;font-size:15px;line-height:22px;color:#444;letter-spacing:0.206px;">Sample Contact Group</span>
<svg style="left:282.7px;top:454px;" width="48" height="48" viewBox="0 0 48 48"><rect x="0" y="0" width="48" height="48" fill="#ababab"/><path d="M5 48L6 37C6 30.5 9 27.8 14.5 27.8H32.8C38.4 27.8 41.4 30.5 41.4 37L42.4 48Z" fill="#fff"/><ellipse cx="23.7" cy="17.6" rx="10.4" ry="12.2" fill="#ababab"/><ellipse cx="23.7" cy="17.3" rx="9" ry="10.8" fill="#fff"/></svg>
<span class="t" style="left:341.30px;top:467.90px;font-size:15px;line-height:22px;color:#444;letter-spacing:0.451px;">Doctor Who</span>
<svg style="left:282.7px;top:504px;" width="48" height="48" viewBox="0 0 48 48"><rect x="0" y="0" width="48" height="48" fill="#ababab"/><path d="M5 48L6 37C6 30.5 9 27.8 14.5 27.8H32.8C38.4 27.8 41.4 30.5 41.4 37L42.4 48Z" fill="#fff"/><ellipse cx="23.7" cy="17.6" rx="10.4" ry="12.2" fill="#ababab"/><ellipse cx="23.7" cy="17.3" rx="9" ry="10.8" fill="#fff"/></svg>
<span class="t" style="left:341.30px;top:517.90px;font-size:15px;line-height:22px;color:#444;letter-spacing:0.403px;">Mr. Wizard</span>
<svg style="left:282.7px;top:554px;" width="48" height="48" viewBox="0 0 48 48"><rect x="0" y="0" width="48" height="48" fill="#ababab"/><path d="M5 48L6 37C6 30.5 9 27.8 14.5 27.8H32.8C38.4 27.8 41.4 30.5 41.4 37L42.4 48Z" fill="#fff"/><ellipse cx="23.7" cy="17.6" rx="10.4" ry="12.2" fill="#ababab"/><ellipse cx="23.7" cy="17.3" rx="9" ry="10.8" fill="#fff"/></svg>
<span class="t" style="left:341.30px;top:567.90px;font-size:15px;line-height:22px;color:#444;letter-spacing:0.183px;">Dr. John A. Zoidberg</span>
<svg style="left:246px;top:811px;" width="26" height="17" viewBox="0 0 26 17"><rect x="0.6" y="0.5" width="21" height="15.2" fill="#fff" stroke="#555" stroke-width="1.1"/><path d="M3.0000000000000004 11.700000000000001V10.574Q3.0000000000000004 8 5.574 8H8.226Q10.8 8 10.8 10.574V11.700000000000001Q6.9 14.1 3.0000000000000004 11.700000000000001Z" fill="#5a5a5a"/><path d="M5.3500000000000005 7.8L6.9 10.375L8.450000000000001 7.8Z" fill="#fff"/><circle cx="6.9" cy="5.2" r="2.5" fill="#5a5a5a"/><circle cx="18" cy="10.1" r="6.6" fill="#fff"/><circle cx="18" cy="10.1" r="5.6" fill="#fff" stroke="#2b7bc8" stroke-width="1.1"/><path d="M12.8 8.4H23.2M12.8 11.8H23.2" fill="none" stroke="#2b7bc8" stroke-width="0.9"/><ellipse cx="18" cy="10.1" rx="2.5" ry="5.6" fill="none" stroke="#2b7bc8" stroke-width="0.9"/></svg>
<svg style="left:731px;top:188px;overflow:hidden" width="96" height="96" viewBox="0 0 96 96"><rect x="0" y="0" width="96" height="96" fill="#ababab"/><rect x="0" y="63.4" width="96" height="32.6" fill="#fff"/><ellipse cx="6" cy="41" rx="16" ry="18.2" fill="#fff"/><ellipse cx="90" cy="41" rx="16" ry="18.2" fill="#fff"/><path d="M5.8 96L9 72C10 60 18 55.4 28 55.4H67C77 55.4 85 60 86 72L89.2 96Z" fill="#ababab"/><path d="M11.6 96L14.4 73C15.4 64.8 20.6 61.6 28 61.6H67C74.4 61.6 79.6 64.8 80.6 73L83.4 96Z" fill="#fff"/><ellipse cx="47.4" cy="34.6" rx="22.6" ry="25.4" fill="#ababab"/><ellipse cx="47.4" cy="34" rx="18.8" ry="21.4" fill="#fff"/></svg>
<span class="t" style="left:844.70px;top:188.60px;font-size:23px;line-height:34px;color:#333;letter-spacing:0.287px;">Sample Contact Group</span>
<svg style="left:842.5px;top:269.1px;" width="25" height="25" viewBox="0 0 25 25"><circle cx="12.5" cy="12.5" r="11.3" fill="#fff" stroke="#e1e1e1" stroke-width="1.5"/><path d="M7 8.6H18V15.2H13.4L10.4 18V15.2H7Z" fill="#e1e1e1"/></svg>
<svg style="left:885.5px;top:269.1px;" width="25" height="25" viewBox="0 0 25 25"><circle cx="12.5" cy="12.5" r="11.3" fill="#fff" stroke="#e1e1e1" stroke-width="1.5"/><path d="M9.6 7.2L11.6 6.6L12.8 9.8L11.2 10.8C11.6 12.8 12.6 14.4 14.2 15.6L15.6 14.6L17.8 17L16.6 18.4C12.4 18 8.6 12.4 9.6 7.2Z" fill="#e1e1e1"/></svg>
<svg style="left:928.5px;top:269.1px;" width="25" height="25" viewBox="0 0 25 25"><circle cx="12.5" cy="12.5" r="11.3" fill="#fff" stroke="#e1e1e1" stroke-width="1.5"/><rect x="7" y="10.4" width="8.6" height="6.8" rx="1" fill="#e1e1e1"/><path d="M15.6 13L18.6 11V16.8L15.6 14.8Z" fill="#e1e1e1"/><circle cx="9.4" cy="8.6" r="1.9" fill="#e1e1e1"/><circle cx="13.6" cy="8.4" r="2.2" fill="#e1e1e1"/></svg>
<svg style="left:971.5px;top:269.1px;" width="25" height="25" viewBox="0 0 25 25"><circle cx="12.5" cy="12.5" r="11.3" fill="#fff" stroke="#666" stroke-width="1.5"/><rect x="6.6" y="8.4" width="11.8" height="8.4" fill="#666"/><path d="M6.8 8.8L12.5 13.4L18.2 8.8" fill="none" stroke="#fff" stroke-width="1.1"/></svg>
<div style="left:731px;top:304.5px;width:724px;height:1px;background:#e1e1e1;"></div>
<span class="t" style="left:736.60px;top:319.50px;font-size:12px;line-height:18px;color:#1565b0;font-weight:bold;letter-spacing:-0.748px;">MEMBERS</span>
<div style="left:798.5px;top:321px;width:1px;height:16px;background:#d8d8d8;"></div>
<span class="t" style="left:807.00px;top:319.50px;font-size:12px;line-height:18px;color:#444;letter-spacing:-1.068px;">NOTES</span>
<span class="t" style="left:737.00px;top:352.50px;font-size:12px;line-height:18px;color:#444;letter-spacing:-0.238px;">Beverly Crusher (crusher@1701d.com)</span>
<span class="t" style="left:737.00px;top:376.70px;font-size:12px;line-height:18px;color:#444;letter-spacing:-0.174px;">Dr. Bones McCoy</span>
<span class="t" style="left:737.00px;top:400.80px;font-size:12px;line-height:18px;color:#444;letter-spacing:-0.097px;">Dr. John A. Zoidberg</span>
<span class="t" style="left:737.00px;top:424.70px;font-size:12px;line-height:18px;color:#444;letter-spacing:-0.073px;">Miss Another Sample</span>
<div style="left:646px;top:459px;width:786px;height:401px;background:#fff;box-shadow:0 1px 8px 0px rgba(0,0,0,0.55);"></div>
<div style="left:646px;top:459px;width:786px;height:65px;background:#106ebe;"></div>
<div style="left:646px;top:524px;width:786px;height:92px;background:#f3f3f3;"></div>
<div style="left:646px;top:616px;width:786px;height:1px;background:#d2d2d2;"></div>
<div style="left:646px;top:459px;width:1px;height:401px;background:#106ebe;"></div>
<div style="left:1430.5px;top:459px;width:1.5px;height:401px;background:#106ebe;"></div>
<svg style="left:646px;top:459px;overflow:hidden" width="786" height="65" viewBox="646 459 786 65"><g fill="#0d4f94" opacity="0.2"><rect x="1130" y="459" width="302" height="65" opacity="0.3"/><path d="M1138 459H1222C1226 478 1212 494 1186 496L1160 498L1148 508L1150 496C1136 490 1132 474 1138 459Z"/><path d="M1216 459H1310C1312 478 1300 496 1270 500C1250 504 1226 502 1214 494C1222 484 1222 470 1216 459Z"/><path d="M1368 496C1374 484 1400 480 1432 486V512C1410 514 1380 512 1368 496Z"/><path d="M1180 512C1230 506 1330 508 1370 516V524H1170Z" opacity="0.6"/></g></svg>
<div style="left:708px;top:494px;width:103px;height:30px;background:#f3f3f3;"></div>
<span class="t" style="left:667.00px;top:500.00px;font-size:12px;line-height:18px;color:#fff;letter-spacing:-0.334px;">File</span>
<span class="t" style="left:720.40px;top:500.00px;font-size:12px;line-height:18px;color:#106ebe;letter-spacing:-0.034px;">Contact Group</span>
<span class="t" style="left:825.30px;top:500.00px;font-size:12px;line-height:18px;color:#fff;letter-spacing:-0.219px;">Insert</span>
<span class="t" style="left:881.00px;top:500.00px;font-size:12px;line-height:18px;color:#fff;letter-spacing:-0.148px;">Format Text</span>
<span class="t" style="left:970.00px;top:500.00px;font-size:12px;line-height:18px;color:#fff;letter-spacing:-0.391px;">Review</span>
<span class="t" style="left:931.00px;top:468.00px;font-size:12px;line-height:18px;color:#fff;letter-spacing:-0.064px;white-space:pre;">Sample Contact Group  -  Contact Group</span>
<span class="t" style="left:1219.61px;top:465.10px;font-size:14px;line-height:21px;color:#fff;">?</span>
<svg style="left:0;top:0" width="1455" height="860" viewBox="0 0 1455 860"><rect x="669.9" y="470.7" width="12.6" height="12.6" fill="none" stroke="#fff" stroke-width="1.4"/><rect x="669.9" y="477.6" width="12.6" height="5.7" fill="#fff"/><rect x="672.8" y="479.8" width="6.4" height="3.6" fill="#106ebe"/><rect x="674.8" y="480.6" width="1.6" height="2.8" fill="#fff"/><path d="M699.2 475.4H707C710.2 475.4 711.8 477.2 711.8 479.2C711.8 481.4 710.2 482.8 707.6 483M703.6 471.2L699.2 475.4L703.6 479.6" fill="none" stroke="#3b8ad6" stroke-width="2"/><path d="M730.6 473.6C728.6 474.8 727.8 476.6 727.8 478.4C727.8 481.2 730.2 483.2 733.2 483.2C736.2 483.2 738.6 481.2 738.6 478.4C738.6 476 737.4 474.4 735.4 473.4M731.4 471.6H735.6V475.8" fill="none" stroke="#3b8ad6" stroke-width="1.9"/><path d="M763 482.6V472.8M759 476.6L763 472.4L767 476.6" fill="none" stroke="#3b8ad6" stroke-width="1.9"/><path d="M792 471.4V481.2M788 477.4L792 481.6L796 477.4" fill="none" stroke="#3b8ad6" stroke-width="1.9"/><path d="M817.6 474.6H823.2" stroke="#fff" stroke-width="1.3"/><path d="M817.4 477.2H823.4L820.4 480.6Z" fill="#fff"/><rect x="1263.5" y="470.5" width="12" height="9" fill="none" stroke="#fff" stroke-width="1"/><path d="M1263.5 473.5H1275.5" stroke="#fff" stroke-width="1"/><path d="M1269.5 478.6V475M1267.3 477.2L1269.5 475L1271.7 477.2" fill="none" stroke="#fff" stroke-width="1.1"/><path d="M1311 475.5H1321" stroke="#fff" stroke-width="1"/><rect x="1357.5" y="470.5" width="9" height="9" fill="none" stroke="#fff" stroke-width="1"/><path d="M1403 470.2L1413 480.2M1413 470.2L1403 480.2" stroke="#fff" stroke-width="1.1"/><rect x="669" y="533.6" width="20.4" height="15.4" fill="#fff" stroke="#8a8a8a" stroke-width="1"/><path d="M682 540.5H687" stroke="#a8a8a8" stroke-width="0.9"/><path d="M682 543H687" stroke="#a8a8a8" stroke-width="0.9"/><path d="M682 545.5H687" stroke="#a8a8a8" stroke-width="0.9"/><path d="M662 541H679.4L681 542.6V559.6H662Z" fill="#a45fc4"/><rect x="666" y="541" width="11.6" height="9" fill="#fff"/><rect x="667.6" y="555" width="7.6" height="4.6" fill="#fff"/><rect x="669" y="556" width="2.2" height="3.6" fill="#a45fc4"/><path d="M672.4 546.6C672.4 541.2 676 538.4 682.6 538.4V535L688.4 540L682.6 545V541.6C678.6 541.6 675.6 543 675.4 546.6Z" fill="#3f74c0" stroke="#f3f3f3" stroke-width="0.6"/><g transform="translate(468.1 460.2)"><path d="M239.6 72.8C243 73.5 247.6 77 253.4 82.2C257 86 261 93 264.3 98.8L263 99C259 95.5 254 90 250.1 86.4C246 83 242 80 237.8 77.6C235.8 75.5 237 72.6 239.6 72.8Z" fill="#6d6d6d"/><path d="M264.2 75.4C258 77.5 251 81 246.7 84.3C242 88 238 92 236.2 95C235 98 237.5 99.6 239.4 98.2C241 96.5 244 92 248.8 87.2C253 83 259 78.5 264.3 75.9Z" fill="#6d6d6d"/></g><rect x="749.6" y="533.6" width="26.8" height="20.8" fill="#fff" stroke="#7a7a7a" stroke-width="1.2"/><path d="M752.0 550.4V548.5Q752.0 545.2 755.3 545.2H758.7Q762.0 545.2 762.0 548.5V550.4Q757 552.8000000000001 752.0 550.4Z" fill="#4a7ebb"/><path d="M754.954 545.0L757 548.335L759.046 545.0Z" fill="#fff"/><circle cx="757" cy="540.7" r="3.3" fill="#4a7ebb"/><path d="M764 539.5H774" stroke="#9a9a9a" stroke-width="1"/><path d="M764 543.5H774" stroke="#9a9a9a" stroke-width="1"/><path d="M764 545.6H774" stroke="#9a9a9a" stroke-width="1"/><path d="M764 547.7H774" stroke="#9a9a9a" stroke-width="1"/><rect x="762" y="547.5" width="17" height="13" fill="#f3f3f3"/><path d="M762.6 551.6H772L768.4 547.2H772.6L779 553.4L772.6 559.6H768.4L772 555H762.6Z" fill="#4a7ebb"/><rect x="803.5" y="527.5" width="54" height="68" fill="#c6c6c6" stroke="#9a9a9a" stroke-width="1"/><path d="M828.4 552.4V548.68Q828.4 543.4 833.68 543.4H839.12Q844.4 543.4 844.4 548.68V552.4Q836.4 554.8000000000001 828.4 552.4Z" fill="#6fa38f"/><path d="M833.486 543.1999999999999L836.4 547.865L839.314 543.1999999999999Z" fill="#c6c6c6"/><circle cx="836.4" cy="537.2" r="4.7" fill="#6fa38f"/><circle cx="824.2" cy="541.4" r="5.8" fill="#c6c6c6"/><path d="M814.7 556.8V554.47Q814.7 548.2 820.97 548.2H827.4300000000001Q833.7 548.2 833.7 554.47V556.8Q824.2 559.2 814.7 556.8Z" fill="#4a7ebb"/><path d="M821.1 548.0L824.2 552.95L827.3000000000001 548.0Z" fill="#c6c6c6"/><circle cx="824.2" cy="541.4" r="5" fill="#4a7ebb"/><rect x="865.6" y="533.0" width="26.8" height="20.2" fill="#fff" stroke="#7a7a7a" stroke-width="1.2"/><path d="M867.1 547.1999999999999V545.91Q867.1 543.6 869.41 543.6H871.7900000000001Q874.1 543.6 874.1 545.91V547.1999999999999Q870.6 549.6 867.1 547.1999999999999Z" fill="#4a7ebb"/><path d="M869.236 543.4L870.6 545.69L871.964 543.4Z" fill="#fff"/><circle cx="870.6" cy="540.8" r="2.2" fill="#4a7ebb"/><path d="M874.5 545.8V544.1099999999999Q874.5 541.8 876.81 541.8H879.19Q881.5 541.8 881.5 544.1099999999999V545.8Q878 548.2 874.5 545.8Z" fill="#6fa38f"/><path d="M876.636 541.5999999999999L878 543.89L879.364 541.5999999999999Z" fill="#fff"/><circle cx="878" cy="538.8" r="2.2" fill="#6fa38f"/><path d="M883.4 538.4H890.4" stroke="#a8a8a8" stroke-width="0.9"/><path d="M883.4 541H890.4" stroke="#a8a8a8" stroke-width="0.9"/><path d="M883.4 543.6H890.4" stroke="#a8a8a8" stroke-width="0.9"/><path d="M883.4 546.2H890.4" stroke="#a8a8a8" stroke-width="0.9"/><path d="M881 548H895V562H885.6L881 557.4Z" fill="#eec87e"/><path d="M881 557.4H885.6V562Z" fill="#d9ae5e"/><path d="M932.7 557.5999999999999V553.988Q932.7 546.2 940.488 546.2H948.512Q956.3 546.2 956.3 553.988V557.5999999999999Q944.5 560.0 932.7 557.5999999999999Z" fill="#808080"/><path d="M940.408 546.0L944.5 552.47L948.592 546.0Z" fill="#f3f3f3"/><circle cx="944.5" cy="539" r="6.6" fill="#808080"/><rect x="949.4" y="548.8" width="14.6" height="14" fill="#f3f3f3"/><path d="M955 550H958.4V554.2H962.6V557.6H958.4V561.8H955V557.6H950.8V554.2H955Z" fill="#6fa38f"/><path d="M991.2 557.5999999999999V553.988Q991.2 546.2 998.988 546.2H1007.012Q1014.8 546.2 1014.8 553.988V557.5999999999999Q1003 560.0 991.2 557.5999999999999Z" fill="#808080"/><path d="M998.908 546.0L1003 552.47L1007.092 546.0Z" fill="#f3f3f3"/><circle cx="1003" cy="539" r="6.6" fill="#808080"/><rect x="1007.4" y="552.8" width="13.6" height="6.6" fill="#f3f3f3"/><rect x="1008.4" y="554" width="11.8" height="3.8" fill="#d9573a"/><rect x="1036.6" y="534.6" width="26.8" height="20.8" fill="#fff" stroke="#7a7a7a" stroke-width="1.2"/><path d="M1038.2 549.1999999999999V547.976Q1038.2 545.6 1040.576 545.6H1043.024Q1045.3999999999999 545.6 1045.3999999999999 547.976V549.1999999999999Q1041.8 551.6 1038.2 549.1999999999999Z" fill="#4a7ebb"/><path d="M1040.374 545.4L1041.8 547.785L1043.2259999999999 545.4Z" fill="#fff"/><circle cx="1041.8" cy="542.6" r="2.3" fill="#4a7ebb"/><path d="M1045.8000000000002 547.5999999999999V545.976Q1045.8000000000002 543.6 1048.1760000000002 543.6H1050.624Q1053.0 543.6 1053.0 545.976V547.5999999999999Q1049.4 550.0 1045.8000000000002 547.5999999999999Z" fill="#6fa38f"/><path d="M1047.9740000000002 543.4L1049.4 545.785L1050.826 543.4Z" fill="#fff"/><circle cx="1049.4" cy="540.6" r="2.3" fill="#6fa38f"/><path d="M1054 540H1061" stroke="#a8a8a8" stroke-width="0.9"/><path d="M1054 543H1061" stroke="#a8a8a8" stroke-width="0.9"/><path d="M1054 546H1061" stroke="#a8a8a8" stroke-width="0.9"/><circle cx="1059" cy="554.6" r="8.2" fill="#f3f3f3"/><path d="M1053.6 553.4C1054.4 550.4 1056.8 548.8 1059.4 548.8C1061 548.8 1062.4 549.4 1063.4 550.4L1065 548.8V553.8H1060L1061.8 552C1061.2 551.4 1060.4 551 1059.4 551C1057.8 551 1056.4 552 1055.8 553.4Z" fill="#6fa38f"/><path d="M1064.6 555.8C1063.8 558.8 1061.4 560.4 1058.8 560.4C1057.2 560.4 1055.8 559.8 1054.8 558.8L1053.2 560.4V555.4H1058.2L1056.4 557.2C1057 557.8 1057.8 558.2 1058.8 558.2C1060.4 558.2 1061.8 557.2 1062.4 555.8Z" fill="#6fa38f"/><rect x="1094.6" y="537.6" width="27.8" height="17.2" fill="#fff" stroke="#7a7a7a" stroke-width="1.2"/><rect x="1116" y="540" width="3.6" height="5" fill="#3f74c0"/><path d="M1100 547.6H1106" stroke="#a8a8a8" stroke-width="0.9"/><path d="M1100 550.4H1106" stroke="#a8a8a8" stroke-width="0.9"/><rect x="1104.6" y="547.6" width="20.2" height="13.8" fill="#fff" stroke="#7a7a7a" stroke-width="1.2"/><path d="M1106.4 558.4V557.908Q1106.4 555.4 1108.9080000000001 555.4H1111.492Q1114.0 555.4 1114.0 557.908V558.4Q1110.2 560.8000000000001 1106.4 558.4Z" fill="#4a7ebb"/><path d="M1108.712 555.1999999999999L1110.2 557.68L1111.688 555.1999999999999Z" fill="#fff"/><circle cx="1110.2" cy="552.4" r="2.4" fill="#4a7ebb"/><path d="M1116 551.6H1122.4" stroke="#9a9a9a" stroke-width="0.9"/><path d="M1116 553.8H1122.4" stroke="#9a9a9a" stroke-width="0.9"/><path d="M1116 556H1122.4" stroke="#9a9a9a" stroke-width="0.9"/><path d="M1116 558.2H1122.4" stroke="#9a9a9a" stroke-width="0.9"/><rect x="1141" y="534" width="26" height="24" fill="#fff"/><rect x="1141" y="534" width="26" height="3.4" fill="#767676"/><path d="M1141.5 537.4V558" stroke="#a8a8a8" stroke-width="1"/><path d="M1146.2 537.4V558" stroke="#a8a8a8" stroke-width="1"/><path d="M1151.4 537.4V558" stroke="#a8a8a8" stroke-width="1"/><path d="M1156.6 537.4V558" stroke="#a8a8a8" stroke-width="1"/><path d="M1161.8 537.4V558" stroke="#a8a8a8" stroke-width="1"/><path d="M1166.5 537.4V558" stroke="#a8a8a8" stroke-width="1"/><path d="M1141 541.5H1167" stroke="#a8a8a8" stroke-width="1"/><path d="M1141 545.6H1167" stroke="#a8a8a8" stroke-width="1"/><path d="M1141 549.8H1167" stroke="#a8a8a8" stroke-width="1"/><path d="M1141 553.9H1167" stroke="#a8a8a8" stroke-width="1"/><path d="M1141 557.5H1167" stroke="#a8a8a8" stroke-width="1"/><path d="M1146.3 547.4V542.6H1151.6V547" fill="none" stroke="#e8823a" stroke-width="1.3"/><rect x="1149.6" y="547.6" width="19.8" height="13.8" fill="#fff" stroke="#7a7a7a" stroke-width="1.2"/><path d="M1151.4 558.4V557.908Q1151.4 555.4 1153.9080000000001 555.4H1156.492Q1159.0 555.4 1159.0 557.908V558.4Q1155.2 560.8000000000001 1151.4 558.4Z" fill="#4a7ebb"/><path d="M1153.712 555.1999999999999L1155.2 557.68L1156.688 555.1999999999999Z" fill="#fff"/><circle cx="1155.2" cy="552.4" r="2.4" fill="#4a7ebb"/><path d="M1161 551.6H1167.4" stroke="#9a9a9a" stroke-width="0.9"/><path d="M1161 553.8H1167.4" stroke="#9a9a9a" stroke-width="0.9"/><path d="M1161 556H1167.4" stroke="#9a9a9a" stroke-width="0.9"/><path d="M1161 558.2H1167.4" stroke="#9a9a9a" stroke-width="0.9"/><rect x="1212.8" y="531.8" width="7.1" height="13.3" fill="#4a7ebb"/><rect x="1220.9" y="531.8" width="7.1" height="13.3" fill="#e8893c"/><rect x="1229.0" y="531.8" width="7.1" height="13.3" fill="#f0c37c"/><rect x="1212.8" y="546.0" width="7.1" height="13.3" fill="#d9573a"/><rect x="1220.9" y="546.0" width="7.1" height="13.3" fill="#6fa38f"/><rect x="1229.0" y="546.0" width="7.1" height="13.3" fill="#9d9d9d"/><path d="M1270 532V559.6" stroke="#777" stroke-width="1.6"/><path d="M1271.6 532.4L1289.6 540.4L1271.6 548Z" fill="#d95a3c"/><path d="M1312.6 546V541C1312.6 530.4 1325.6 530.4 1325.6 541V546" fill="none" stroke="#f0c37c" stroke-width="3.5"/><rect x="1307.6" y="545" width="23" height="15" fill="#f0c37c" rx="1.6"/><circle cx="1319.1" cy="550.6" r="2.4" fill="#fff"/><path d="M1318.1 551.5H1320.1L1320.6 556.8H1317.6Z" fill="#fff"/><circle cx="1373" cy="541.7" r="9" fill="#fdfdfd" stroke="#777" stroke-width="2"/><path d="M1379.8 548.4L1387.8 556.4" stroke="#777" stroke-width="3.6" stroke-linecap="round"/></svg>
<span class="t" style="left:655.66px;top:564.00px;font-size:12px;line-height:18px;color:#3a3a3a;">Save &amp;</span>
<span class="t" style="left:659.66px;top:580.00px;font-size:12px;line-height:18px;color:#3a3a3a;">Close</span>
<span class="t" style="left:700.16px;top:564.00px;font-size:12px;line-height:18px;color:#3a3a3a;">Delete</span>
<span class="t" style="left:700.82px;top:580.00px;font-size:12px;line-height:18px;color:#3a3a3a;">Group</span>
<span class="t" style="left:740.49px;top:564.00px;font-size:12px;line-height:18px;color:#3a3a3a;">Forward</span>
<span class="t" style="left:741.82px;top:580.00px;font-size:12px;line-height:18px;color:#3a3a3a;">Group</span>
<svg style="left:777.6759374999999px;top:587.1px;" width="6" height="3" viewBox="0 0 6 3"><path d="M0 0H6L3.0 3Z" fill="#6a6a6a"/></svg>
<span class="t" style="left:699.82px;top:599.00px;font-size:12px;line-height:18px;color:#4a4a4a;">Actions</span>
<div style="left:794px;top:528px;width:1px;height:84px;background:#b6b6b6;"></div>
<span class="t" style="left:805.00px;top:564.00px;font-size:12px;line-height:18px;color:#3a3a3a;">Members</span>
<span class="t" style="left:862.33px;top:564.00px;font-size:12px;line-height:18px;color:#3a3a3a;">Notes</span>
<span class="t" style="left:834.99px;top:599.00px;font-size:12px;line-height:18px;color:#4a4a4a;">Show</span>
<div style="left:907px;top:528px;width:1px;height:84px;background:#b6b6b6;"></div>
<span class="t" style="left:935.32px;top:564.00px;font-size:12px;line-height:18px;color:#3a3a3a;">Add</span>
<span class="t" style="left:917.00px;top:580.00px;font-size:12px;line-height:18px;color:#3a3a3a;">Members</span>
<svg style="left:969.505px;top:587.1px;" width="6" height="3" viewBox="0 0 6 3"><path d="M0 0H6L3.0 3Z" fill="#6a6a6a"/></svg>
<span class="t" style="left:980.66px;top:564.00px;font-size:12px;line-height:18px;color:#3a3a3a;">Remove</span>
<span class="t" style="left:981.00px;top:580.00px;font-size:12px;line-height:18px;color:#3a3a3a;">Member</span>
<span class="t" style="left:1030.65px;top:564.00px;font-size:12px;line-height:18px;color:#3a3a3a;">Update</span>
<span class="t" style="left:1038.00px;top:580.00px;font-size:12px;line-height:18px;color:#3a3a3a;">Now</span>
<span class="t" style="left:968.00px;top:599.00px;font-size:12px;line-height:18px;color:#4a4a4a;">Members</span>
<div style="left:1079px;top:528px;width:1px;height:84px;background:#b6b6b6;"></div>
<span class="t" style="left:1093.50px;top:564.00px;font-size:12px;line-height:18px;color:#3a3a3a;">Email</span>
<span class="t" style="left:1132.35px;top:564.00px;font-size:12px;line-height:18px;color:#3a3a3a;">Meeting</span>
<span class="t" style="left:1098.50px;top:599.00px;font-size:12px;line-height:18px;color:#4a4a4a;letter-spacing:-0.466px;">Communicate</span>
<div style="left:1186px;top:528px;width:1px;height:84px;background:#b6b6b6;"></div>
<span class="t" style="left:1195.68px;top:564.00px;font-size:12px;line-height:18px;color:#3a3a3a;">Categorize</span>
<svg style="left:1221.7px;top:586.9px;" width="6" height="3" viewBox="0 0 6 3"><path d="M0 0H6L3.0 3Z" fill="#6a6a6a"/></svg>
<span class="t" style="left:1258.66px;top:564.00px;font-size:12px;line-height:18px;color:#3a3a3a;">Follow</span>
<span class="t" style="left:1264.33px;top:580.00px;font-size:12px;line-height:18px;color:#3a3a3a;">Up</span>
<svg style="left:1282.1699999999998px;top:587.1px;" width="6" height="3" viewBox="0 0 6 3"><path d="M0 0H6L3.0 3Z" fill="#6a6a6a"/></svg>
<span class="t" style="left:1300.33px;top:564.00px;font-size:12px;line-height:18px;color:#3a3a3a;">Private</span>
<span class="t" style="left:1253.33px;top:599.00px;font-size:12px;line-height:18px;color:#4a4a4a;">Tags</span>
<div style="left:1347px;top:528px;width:1px;height:84px;background:#b6b6b6;"></div>
<span class="t" style="left:1360.66px;top:564.00px;font-size:12px;line-height:18px;color:#3a3a3a;">Zoom</span>
<span class="t" style="left:1360.66px;top:599.00px;font-size:12px;line-height:18px;color:#4a4a4a;">Zoom</span>
<div style="left:1405px;top:528px;width:1px;height:84px;background:#b6b6b6;"></div>
<span class="t" style="left:653.70px;top:625.50px;font-size:11.5px;line-height:17px;color:#666;letter-spacing:-0.844px;">Name</span>
<div style="left:700px;top:624px;width:725px;height:20px;background:#fff;border:1px solid #1a73c8;box-sizing:border-box;"></div>
<span class="t" style="left:703.80px;top:625.50px;font-size:11.5px;line-height:17px;color:#000;letter-spacing:-0.064px;">Sample Contact Group</span>
<div style="left:653px;top:648px;width:772px;height:215px;background:#fff;border:1px solid #a3aab8;box-sizing:border-box;"></div>
<div style="left:654px;top:663.5px;width:770px;height:1px;background:#f2f2f2;"></div>
<svg style="left:657px;top:650px;" width="11" height="13" viewBox="0 0 11 13"><path d="M0.6 0.6H7L10 3.6V12.4H0.6Z" fill="#fff" stroke="#555" stroke-width="1"/><path d="M7 0.6V3.6H10" fill="none" stroke="#555" stroke-width="0.8"/></svg>
<div style="left:672px;top:650px;width:1px;height:13px;background:#c0c0c0;"></div>
<span class="t" style="left:675.00px;top:648.00px;font-size:11.5px;line-height:17px;color:#000;letter-spacing:-0.669px;">Name</span>
<svg style="left:728.5px;top:652.6px;" width="10" height="6" viewBox="0 0 10 6"><path d="M0 5.6H10L5 0Z" fill="#000"/></svg>
<div style="left:1038px;top:650px;width:1px;height:13px;background:#c0c0c0;"></div>
<span class="t" style="left:1042.00px;top:648.00px;font-size:11.5px;line-height:17px;color:#000;letter-spacing:-0.351px;">Email</span>
<div style="left:654px;top:665px;width:753px;height:15px;background:#e8e8e8;"></div>
<svg style="left:655px;top:667.5px;" width="15" height="11" viewBox="0 0 15 11"><rect x="0.5" y="0.5" width="14" height="10" fill="#fff" stroke="#555" stroke-width="1"/><path d="M1.8000000000000003 7.6000000000000005V7.716Q1.8000000000000003 6 3.5160000000000005 6H5.284Q7.0 6 7.0 7.716V7.6000000000000005Q4.4 10.0 1.8000000000000003 7.6000000000000005Z" fill="#2b6fc0"/><circle cx="4.4" cy="3.9" r="1.7" fill="#2b6fc0"/><path d="M8.4 3.5H12.6" stroke="#777" stroke-width="0.9"/><path d="M8.4 5.5H12.6" stroke="#777" stroke-width="0.9"/><path d="M8.4 7.5H12.6" stroke="#777" stroke-width="0.9"/></svg>
<span class="t" style="left:675.00px;top:664.50px;font-size:11.5px;line-height:17px;color:#000;letter-spacing:-0.280px;">Beverly Crusher (crusher@1701d.com)</span>
<span class="t" style="left:1042.00px;top:664.50px;font-size:11.5px;line-height:17px;color:#000;letter-spacing:-0.172px;">crusher@1701d.com</span>
<svg style="left:655px;top:683.5px;" width="15" height="11" viewBox="0 0 15 11"><rect x="0.5" y="0.5" width="14" height="10" fill="#fff" stroke="#555" stroke-width="1"/><path d="M1.8000000000000003 7.6000000000000005V7.716Q1.8000000000000003 6 3.5160000000000005 6H5.284Q7.0 6 7.0 7.716V7.6000000000000005Q4.4 10.0 1.8000000000000003 7.6000000000000005Z" fill="#2b6fc0"/><circle cx="4.4" cy="3.9" r="1.7" fill="#2b6fc0"/><path d="M8.4 3.5H12.6" stroke="#777" stroke-width="0.9"/><path d="M8.4 5.5H12.6" stroke="#777" stroke-width="0.9"/><path d="M8.4 7.5H12.6" stroke="#777" stroke-width="0.9"/></svg>
<span class="t" style="left:675.00px;top:680.50px;font-size:11.5px;line-height:17px;color:#000;letter-spacing:-0.162px;">Bones McCoy (bones@enterprise.com)</span>
<span class="t" style="left:1042.00px;top:680.50px;font-size:11.5px;line-height:17px;color:#000;letter-spacing:-0.003px;">bones@enterprise.com</span>
<svg style="left:655px;top:699.5px;" width="15" height="11" viewBox="0 0 15 11"><rect x="0.5" y="0.5" width="14" height="10" fill="#fff" stroke="#555" stroke-width="1"/><path d="M1.8000000000000003 7.6000000000000005V7.716Q1.8000000000000003 6 3.5160000000000005 6H5.284Q7.0 6 7.0 7.716V7.6000000000000005Q4.4 10.0 1.8000000000000003 7.6000000000000005Z" fill="#2b6fc0"/><circle cx="4.4" cy="3.9" r="1.7" fill="#2b6fc0"/><path d="M8.4 3.5H12.6" stroke="#777" stroke-width="0.9"/><path d="M8.4 5.5H12.6" stroke="#777" stroke-width="0.9"/><path d="M8.4 7.5H12.6" stroke="#777" stroke-width="0.9"/></svg>
<span class="t" style="left:675.00px;top:696.50px;font-size:11.5px;line-height:17px;color:#000;letter-spacing:-0.025px;">John A. Zoidberg (zoidberg@planetexpress.com)</span>
<span class="t" style="left:1042.00px;top:696.50px;font-size:11.5px;line-height:17px;color:#000;letter-spacing:-0.012px;">zoidberg@planetexpress.com</span>
<svg style="left:655px;top:715.5px;" width="15" height="11" viewBox="0 0 15 11"><rect x="0.5" y="0.5" width="14" height="10" fill="#fff" stroke="#555" stroke-width="1"/><path d="M1.8000000000000003 7.6000000000000005V7.716Q1.8000000000000003 6 3.5160000000000005 6H5.284Q7.0 6 7.0 7.716V7.6000000000000005Q4.4 10.0 1.8000000000000003 7.6000000000000005Z" fill="#2b6fc0"/><circle cx="4.4" cy="3.9" r="1.7" fill="#2b6fc0"/><path d="M8.4 3.5H12.6" stroke="#777" stroke-width="0.9"/><path d="M8.4 5.5H12.6" stroke="#777" stroke-width="0.9"/><path d="M8.4 7.5H12.6" stroke="#777" stroke-width="0.9"/></svg>
<span class="t" style="left:675.00px;top:712.50px;font-size:11.5px;line-height:17px;color:#000;letter-spacing:-0.190px;">Sample Contact (sample2@test.com)</span>
<span class="t" style="left:1042.00px;top:712.50px;font-size:11.5px;line-height:17px;color:#000;letter-spacing:-0.162px;">sample2@test.com</span>
<svg style="left:0;top:0;filter:drop-shadow(0.6px 0.8px 0.6px rgba(60,0,0,0.45));" width="1455" height="860" viewBox="0 0 1455 860"><path d="M10.5 205.2A38.7 20.5 0 1 0 87.9 205.2A38.7 20.5 0 1 0 10.5 205.2ZM15.0 204.89999999999998A34.5 16.3 0 1 1 84.0 204.89999999999998A34.5 16.3 0 1 1 15.0 204.89999999999998Z" fill="#de060c" fill-rule="evenodd"/><path d="M94.9 218.0L140.2 268.1L133.4 268.5L149.6 273.6L144.8 257.3L144.3 264.1Z" fill="#de060c" stroke="#de060c" stroke-width="1.2" stroke-linejoin="round"/><path d="M244.0 426.3A142.8 37.7 0 1 0 529.6 426.3A142.8 37.7 0 1 0 244.0 426.3ZM248.79999999999998 425.45A138.20000000000002 33.85 0 1 1 525.2 425.45A138.20000000000002 33.85 0 1 1 248.79999999999998 425.45Z" fill="#de060c" fill-rule="evenodd"/><path d="M532.0 451.4L604.4 481.9L598.5 484.8L615.4 482.6L604.2 469.9L606.7 475.9Z" fill="#de060c" stroke="#de060c" stroke-width="1.2" stroke-linejoin="round"/><path d="M94.9 773.7L85.2 667.5L90.8 671.4L81.1 657.4L74.9 673.2L79.5 668.2Z" fill="#de060c" stroke="#de060c" stroke-width="1.2" stroke-linejoin="round"/><path d="M80.5 813.9A24 17.7 0 1 0 128.5 813.9A24 17.7 0 1 0 80.5 813.9ZM84.7 813.9A19.8 13.5 0 1 1 124.3 813.9A19.8 13.5 0 1 1 84.7 813.9Z" fill="#de060c" fill-rule="evenodd"/><path d="M907.2 567.5A39.4 45.2 0 1 0 986.0 567.5A39.4 45.2 0 1 0 907.2 567.5ZM911.9 567.5A34.699999999999996 40.5 0 1 1 981.3000000000001 567.5A34.699999999999996 40.5 0 1 1 911.9 567.5Z" fill="#de060c" fill-rule="evenodd"/></svg>
</body></html>
